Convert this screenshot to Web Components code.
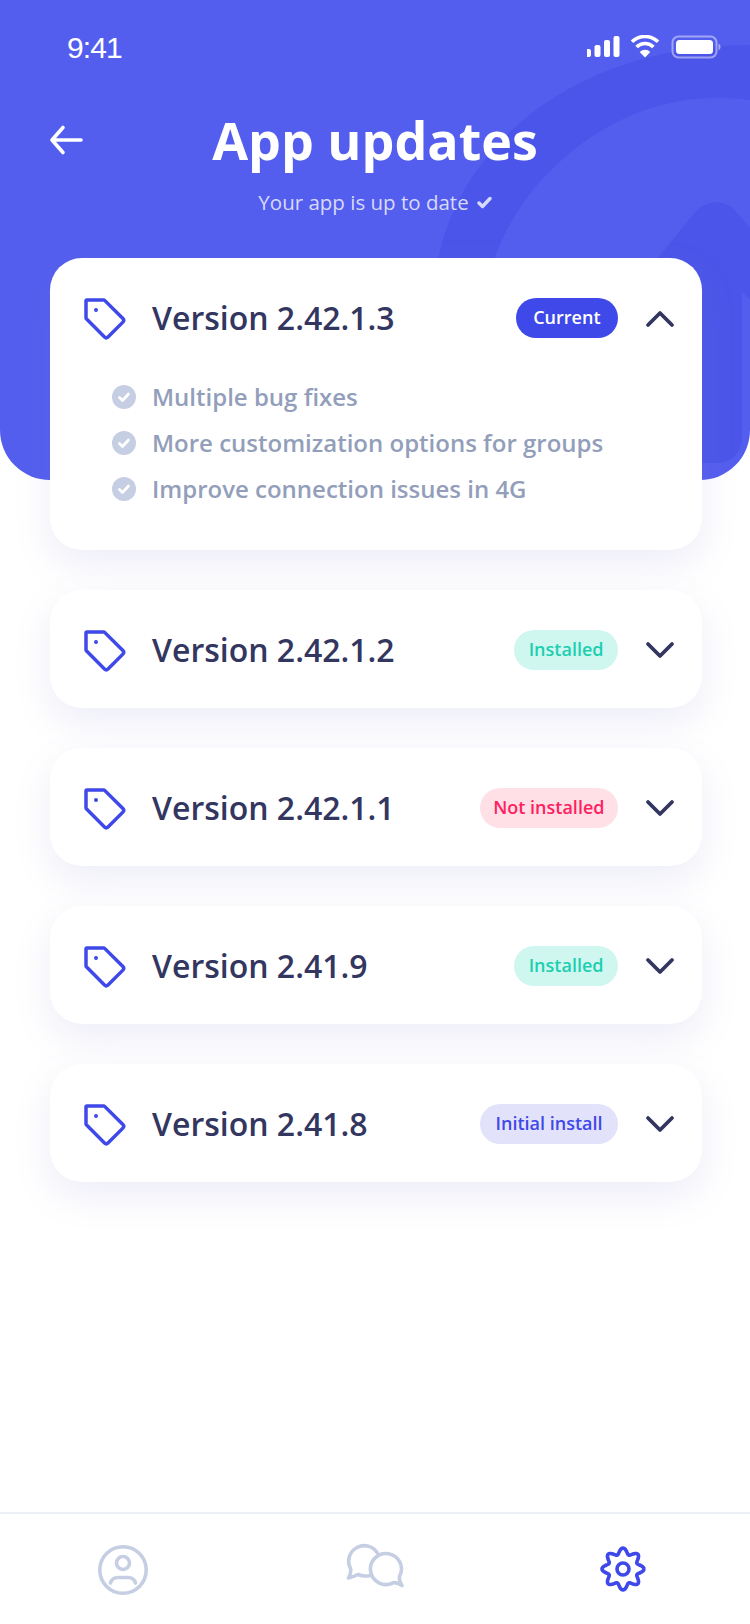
<!DOCTYPE html>
<html lang="en">
<head>
<meta charset="utf-8">
<title>App updates</title>
<style>
  html, body { margin: 0; padding: 0; }
  body {
    width: 750px;
    height: 1624px;
    display: flex;
    flex-direction: column;
    background: #fff;
    font-family: "Open Sans", "Liberation Sans", sans-serif;
    overflow: hidden;
  }
  main-list { flex: 1; }
</style>
</head>
<body>
<app-header title-text="App updates" subtitle="Your app is up to date"></app-header>
<main-list>
  <version-card version="Version 2.42.1.3" status="current" label="Current" open>
    <change-item>Multiple bug fixes</change-item>
    <change-item>More customization options for groups</change-item>
    <change-item>Improve connection issues in 4G</change-item>
  </version-card>
  <version-card version="Version 2.42.1.2" status="installed" label="Installed"></version-card>
  <version-card version="Version 2.42.1.1" status="missing" label="Not installed"></version-card>
  <version-card version="Version 2.41.9" status="installed" label="Installed"></version-card>
  <version-card version="Version 2.41.8" status="initial" label="Initial install"></version-card>
</main-list>
<tab-bar></tab-bar>

<script>
class StatusBar extends HTMLElement {
  constructor() {
    super();
    this.attachShadow({ mode: 'open' });
    this.shadowRoot.innerHTML = `
      <style>
        :host { display: flex; align-items: center; justify-content: space-between; height: 48px; padding: 23px 29px 0 67px; color: #fff; }
        .time { font: 400 30px/48px "Liberation Sans", sans-serif; letter-spacing: -0.9px; transform: translateY(1px); }
        svg { display: block; }
      </style>
      <span class="time">9:41</span>
      <svg width="134" height="24" viewBox="0 0 134 24">
        <g fill="#fff" transform="translate(-2 0)">
          <rect x="0" y="14" width="6" height="8" rx="2"/>
          <rect x="9.5" y="10" width="6" height="12" rx="2"/>
          <rect x="19" y="5" width="6" height="17" rx="2"/>
          <rect x="28.5" y="1" width="6" height="21" rx="2"/>
        </g>
        <g transform="translate(-1 0)">
          <path fill="#fff" d="M59 22.5l-5.3-5.6a7.6 7.6 0 0 1 10.6 0z"/>
          <path fill="none" stroke="#fff" stroke-width="3.6" d="M46 6.8a18.6 18.6 0 0 1 26 0"/>
          <path fill="none" stroke="#fff" stroke-width="3.6" d="M50.6 12a12 12 0 0 1 16.8 0"/>
        </g>
        <rect x="85.5" y="1.5" width="44" height="21" rx="6" fill="none" stroke="#fff" stroke-opacity=".45" stroke-width="2"/>
        <rect x="89" y="5" width="37" height="14" rx="3.5" fill="#fff"/>
        <path d="M131.500 8.500a4 4 0 0 1 0 7z" fill="#fff" fill-opacity=".5"/>
      </svg>`;
  }
}
customElements.define('status-bar', StatusBar);

class AppHeader extends HTMLElement {
  constructor() {
    super();
    this.attachShadow({ mode: 'open' });
    this.shadowRoot.innerHTML = `
      <style>
        :host { display: block; position: relative; height: 480px; margin-bottom: -222px; background: #545eee; border-radius: 0 0 50px 50px; overflow: hidden; color: #fff; }
        .bg { position: absolute; left: 0; top: 0; }
        .content { position: relative; }
        .title-row { display: grid; grid-template-columns: 1fr auto 1fr; align-items: center; margin-top: 35px; height: 68px; }
        .back { padding-left: 49px; }
        .back svg { display: block; }
        h1 { margin: 0; font: 700 52px/68px "Open Sans", sans-serif; }
        .sub { display: flex; justify-content: center; align-items: center; gap: 8px; margin-top: 13px; font: 500 20.5px/30px "Open Sans", sans-serif; color: #d7daFb; }
      </style>
      <svg class="bg" width="750" height="480" viewBox="0 0 750 480" fill="#4b55e9">
        <path d="M438 260C462 140 580 45 750 45V100Q735 98 720 98C620 95 525 170 494 260V480H438z"/>
        <path d="M640 280L695 212Q713 195 733 208L750 228V300L742 292V435Q742 463 714 463H640z"/>
      </svg>
      <div class="content">
        <status-bar></status-bar>
        <div class="title-row">
          <div class="back">
            <svg width="36" height="32" viewBox="0 0 36 32" fill="none" stroke="#fff" stroke-width="3.6" stroke-linecap="round" stroke-linejoin="round">
              <path d="M32 16H3M14 3.500L3 16l11 12.500"/>
            </svg>
          </div>
          <h1>${this.getAttribute('title-text')}</h1>
          <div></div>
        </div>
        <div class="sub">
          <span>${this.getAttribute('subtitle')}</span>
          <svg width="15" height="13" viewBox="0 0 15 13" fill="none" stroke="#d7dafb" stroke-width="3.4" stroke-linecap="round" stroke-linejoin="round"><path d="M2 7l3.500 3.500L13 2.500"/></svg>
        </div>
      </div>`;
  }
}
customElements.define('app-header', AppHeader);

class MainList extends HTMLElement {
  constructor() {
    super();
    this.attachShadow({ mode: 'open' });
    this.shadowRoot.innerHTML = `
      <style>
        :host { display: flex; flex-direction: column; gap: 40px; padding: 0 48px 0 50px; position: relative; }
      </style>
      <slot></slot>`;
  }
}
customElements.define('main-list', MainList);

class StatusPill extends HTMLElement {
  static get observedAttributes() { return ['status']; }
  constructor() {
    super();
    this.attachShadow({ mode: 'open' });
    this.shadowRoot.innerHTML = `
      <style>
        :host { display: block; height: 40px; padding: 0 17.5px; border-radius: 20px; font: 600 18px/39px "Open Sans", sans-serif; white-space: nowrap; }
        :host([status=current]) { background: #3f48e8; color: #fff; }
        :host([status=installed]) { background: #cff7f0; color: #1ccfb0; padding: 0 14.5px; }
        :host([status=missing]) { background: #ffe0e6; color: #ff2060; padding: 0 13.5px; }
        :host([status=initial]) { background: #e2e3fb; color: #3f48e8; padding: 0 15.5px; }
      </style>
      <slot></slot>`;
  }
}
customElements.define('status-pill', StatusPill);

class ChangeItem extends HTMLElement {
  constructor() {
    super();
    this.attachShadow({ mode: 'open' });
    this.shadowRoot.innerHTML = `
      <style>
        :host { display: flex; align-items: center; gap: 16px; height: 46px; font: 600 24px/46px "Open Sans", sans-serif; color: #929eba; }
        svg { display: block; flex: none; }
      </style>
      <svg width="24" height="24" viewBox="0 0 24 24">
        <circle cx="12" cy="12" r="12" fill="#c5cee2"/>
        <path d="M7.500 12.500l3 3 6-6.500" fill="none" stroke="#fff" stroke-width="2.800" stroke-linecap="round" stroke-linejoin="round"/>
      </svg>
      <span><slot></slot></span>`;
  }
}
customElements.define('change-item', ChangeItem);

class VersionCard extends HTMLElement {
  constructor() {
    super();
    this.attachShadow({ mode: 'open' });
    const open = this.hasAttribute('open');
    const chevron = open ? 'M3 17L15 5l12 12' : 'M3 3l12 12L27 3';
    this.shadowRoot.innerHTML = `
      <style>
        :host { display: block; background: #fff; border-radius: 32px; box-shadow: 0 14px 36px rgba(130, 130, 205, .14); }
        .row { display: flex; align-items: center; height: 40px; padding: 40px 27px 38px 33px; }
        .tag { display: block; flex: none; margin-right: 25px; transform: translateY(1px); }
        .name { flex: 1; font: 600 32px/40px "Open Sans", sans-serif; color: #33365f; white-space: nowrap; }
        .chev { display: block; flex: none; margin-left: 27px; }
        .list { padding: 0 0 38px 62px; margin-top: -2px; }
      </style>
      <div class="row">
        <svg class="tag" width="44" height="44" viewBox="0 0 44 44" fill="none" stroke="#3f48e8" stroke-width="3.500" stroke-linejoin="round">
          <path d="M4 3h16.500a2 2 0 0 1 1.400.6l18 18a2.500 2.500 0 0 1 0 3.500L25 40a2.500 2.500 0 0 1-3.500 0L3.600 22.100a2 2 0 0 1-.6-1.400V4a1 1 0 0 1 1-1z"/>
          <circle cx="13" cy="13" r="2" fill="#3f48e8" stroke="none"/>
        </svg>
        <span class="name">${this.getAttribute('version')}</span>
        <status-pill status="${this.getAttribute('status')}">${this.getAttribute('label')}</status-pill>
        <svg class="chev" width="30" height="20" viewBox="0 0 30 ${open ? 20 : 18}" fill="none" stroke="#33365f" stroke-width="3.800" stroke-linecap="round" stroke-linejoin="round"><path d="${chevron}"/></svg>
      </div>
      ${open ? '<div class="list"><slot></slot></div>' : ''}`;
  }
}
customElements.define('version-card', VersionCard);

class TabBar extends HTMLElement {
  constructor() {
    super();
    this.attachShadow({ mode: 'open' });
    // gear outline is a wavy circle with 8 lobes
    let gear = '';
    for (let i = 0; i <= 160; i++) {
      const a = i / 160 * Math.PI * 2;
      const r = 18 + 3 * Math.cos(8 * a);
      gear += (i ? 'L' : 'M') + (24 + r * Math.cos(a)).toFixed(2) + ' ' + (24 + r * Math.sin(a)).toFixed(2);
    }
    this.shadowRoot.innerHTML = `
      <style>
        :host { display: flex; height: 110px; border-top: 2px solid #edf0f6; background: #fff; }
        .tab { flex: none; display: flex; justify-content: center; padding-top: 29px; }
        .gear { padding-top: 31px; }
        svg { display: block; }
      </style>
      <div class="tab" style="width: 246px">
        <svg width="54" height="54" viewBox="0 0 54 54" fill="none" stroke="#c5cee2" stroke-width="3.600" stroke-linecap="round">
          <circle cx="27" cy="27" r="23.200"/>
          <circle cx="27" cy="20" r="6.500"/>
          <path d="M14.500 40c1-3.500 4-5.500 7.500-5.500h10c3.500 0 6.500 2 7.500 5.500"/>
        </svg>
      </div>
      <div class="tab" style="width: 256px">
        <svg width="62" height="54" viewBox="0 0 62 54" fill="none" stroke="#c5cee2" stroke-width="3.600" stroke-linecap="round" stroke-linejoin="round">
          <path d="M35 11A15.500 15.500 0 0 0 7.500 25.500Q8.500 29 5.500 35Q10 34 15 31.500Q21 34 27 32.500"/>
          <path d="M56.500 33.500A15.500 15.500 0 1 0 50 39.800Q54 39 59 42.500Q56 39 56.500 33.500z"/>
        </svg>
      </div>
      <div class="tab gear" style="width: 241px">
        <svg width="48" height="48" viewBox="0 0 48 48" fill="none" stroke="#3f48e8" stroke-width="3.600" stroke-linejoin="round">
          <path d="${gear}"/>
          <circle cx="24" cy="24" r="6"/>
        </svg>
      </div>`;
  }
}
customElements.define('tab-bar', TabBar);
</script>
</body>
</html>
